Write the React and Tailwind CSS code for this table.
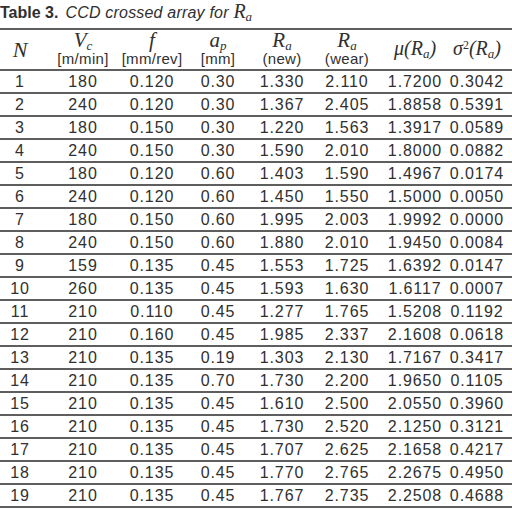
const ROWS = [
  [1, 180, '0.120', '0.30', '1.330', '2.110', '1.7200', '0.3042'],
  [2, 240, '0.120', '0.30', '1.367', '2.405', '1.8858', '0.5391'],
  [3, 180, '0.150', '0.30', '1.220', '1.563', '1.3917', '0.0589'],
  [4, 240, '0.150', '0.30', '1.590', '2.010', '1.8000', '0.0882'],
  [5, 180, '0.120', '0.60', '1.403', '1.590', '1.4967', '0.0174'],
  [6, 240, '0.120', '0.60', '1.450', '1.550', '1.5000', '0.0050'],
  [7, 180, '0.150', '0.60', '1.995', '2.003', '1.9992', '0.0000'],
  [8, 240, '0.150', '0.60', '1.880', '2.010', '1.9450', '0.0084'],
  [9, 159, '0.135', '0.45', '1.553', '1.725', '1.6392', '0.0147'],
  [10, 260, '0.135', '0.45', '1.593', '1.630', '1.6117', '0.0007'],
  [11, 210, '0.110', '0.45', '1.277', '1.765', '1.5208', '0.1192'],
  [12, 210, '0.160', '0.45', '1.985', '2.337', '2.1608', '0.0618'],
  [13, 210, '0.135', '0.19', '1.303', '2.130', '1.7167', '0.3417'],
  [14, 210, '0.135', '0.70', '1.730', '2.200', '1.9650', '0.1105'],
  [15, 210, '0.135', '0.45', '1.610', '2.500', '2.0550', '0.3960'],
  [16, 210, '0.135', '0.45', '1.730', '2.520', '2.1250', '0.3121'],
  [17, 210, '0.135', '0.45', '1.707', '2.625', '2.1658', '0.4217'],
  [18, 210, '0.135', '0.45', '1.770', '2.765', '2.2675', '0.4950'],
  [19, 210, '0.135', '0.45', '1.767', '2.735', '2.2508', '0.4688'],
];

// column centres measured off the scan: 20 83 152 218 282 347 415 477
const COLS = 'grid grid-cols-[40px_86px_52px_80px_48px_82px_54px_70px]';
const MATH = "font-['Liberation_Serif',serif] italic";
const SUB = 'text-[13px] leading-none';

function Head({ sym, unit }) {
  return (
    <div className="flex flex-col items-center pt-[1px] whitespace-nowrap">
      <div className={`${MATH} h-[19px] text-[21px] leading-[19px]`}>{sym}</div>
      <div className="h-[17px] pt-[1px] text-[15px] leading-[16px] tracking-[0.3px]">{unit}</div>
    </div>
  );
}

export default function App() {
  return (
    <div className="w-[512px] h-[512px] bg-white text-[#303030] font-['Liberation_Sans',Arial,sans-serif] overflow-hidden">
      <div className="h-[28px] pt-[1px] text-[16px] leading-[20px] whitespace-nowrap">
        <span className="font-bold">Table 3.</span>
        <span className="italic ml-[7px] tracking-[0.2px]">CCD crossed array for </span>
        <span className={`${MATH} text-[20px]`}>
          R<sub className={SUB}>a</sub>
        </span>
      </div>

      <div className={`${COLS} h-[43px] border-y-2 border-[#5e5e5e]`}>
        <div className="flex items-center justify-center">
          <span className={`${MATH} text-[22px]`}>N</span>
        </div>
        <Head sym={<>V<sub className={SUB}>c</sub></>} unit="[m/min]" />
        <Head sym="f" unit="[mm/rev]" />
        <Head sym={<>a<sub className={SUB}>p</sub></>} unit="[mm]" />
        <Head sym={<>R<sub className={SUB}>a</sub></>} unit="(new)" />
        <Head sym={<>R<sub className={SUB}>a</sub></>} unit="(wear)" />
        <div className="flex items-center justify-center whitespace-nowrap pb-[4px]">
          <span className={`${MATH} text-[20px]`}>
            μ(R<sub className={SUB}>a</sub>)
          </span>
        </div>
        <div className="flex items-center justify-center whitespace-nowrap pb-[4px]">
          <span className={`${MATH} text-[20px]`}>
            σ<sup className="not-italic text-[12px] leading-none">2</sup>(R<sub className={SUB}>a</sub>)
          </span>
        </div>
      </div>

      {ROWS.map((r) => (
        <div
          key={r[0]}
          className={`${COLS} h-[23px] border-b-2 border-[#5e5e5e] text-[16px] leading-[21px] tracking-[0.9px]`}
        >
          {r.map((v, i) => (
            <div key={i} className="flex justify-center whitespace-nowrap">
              {v}
            </div>
          ))}
        </div>
      ))}
    </div>
  );
}
